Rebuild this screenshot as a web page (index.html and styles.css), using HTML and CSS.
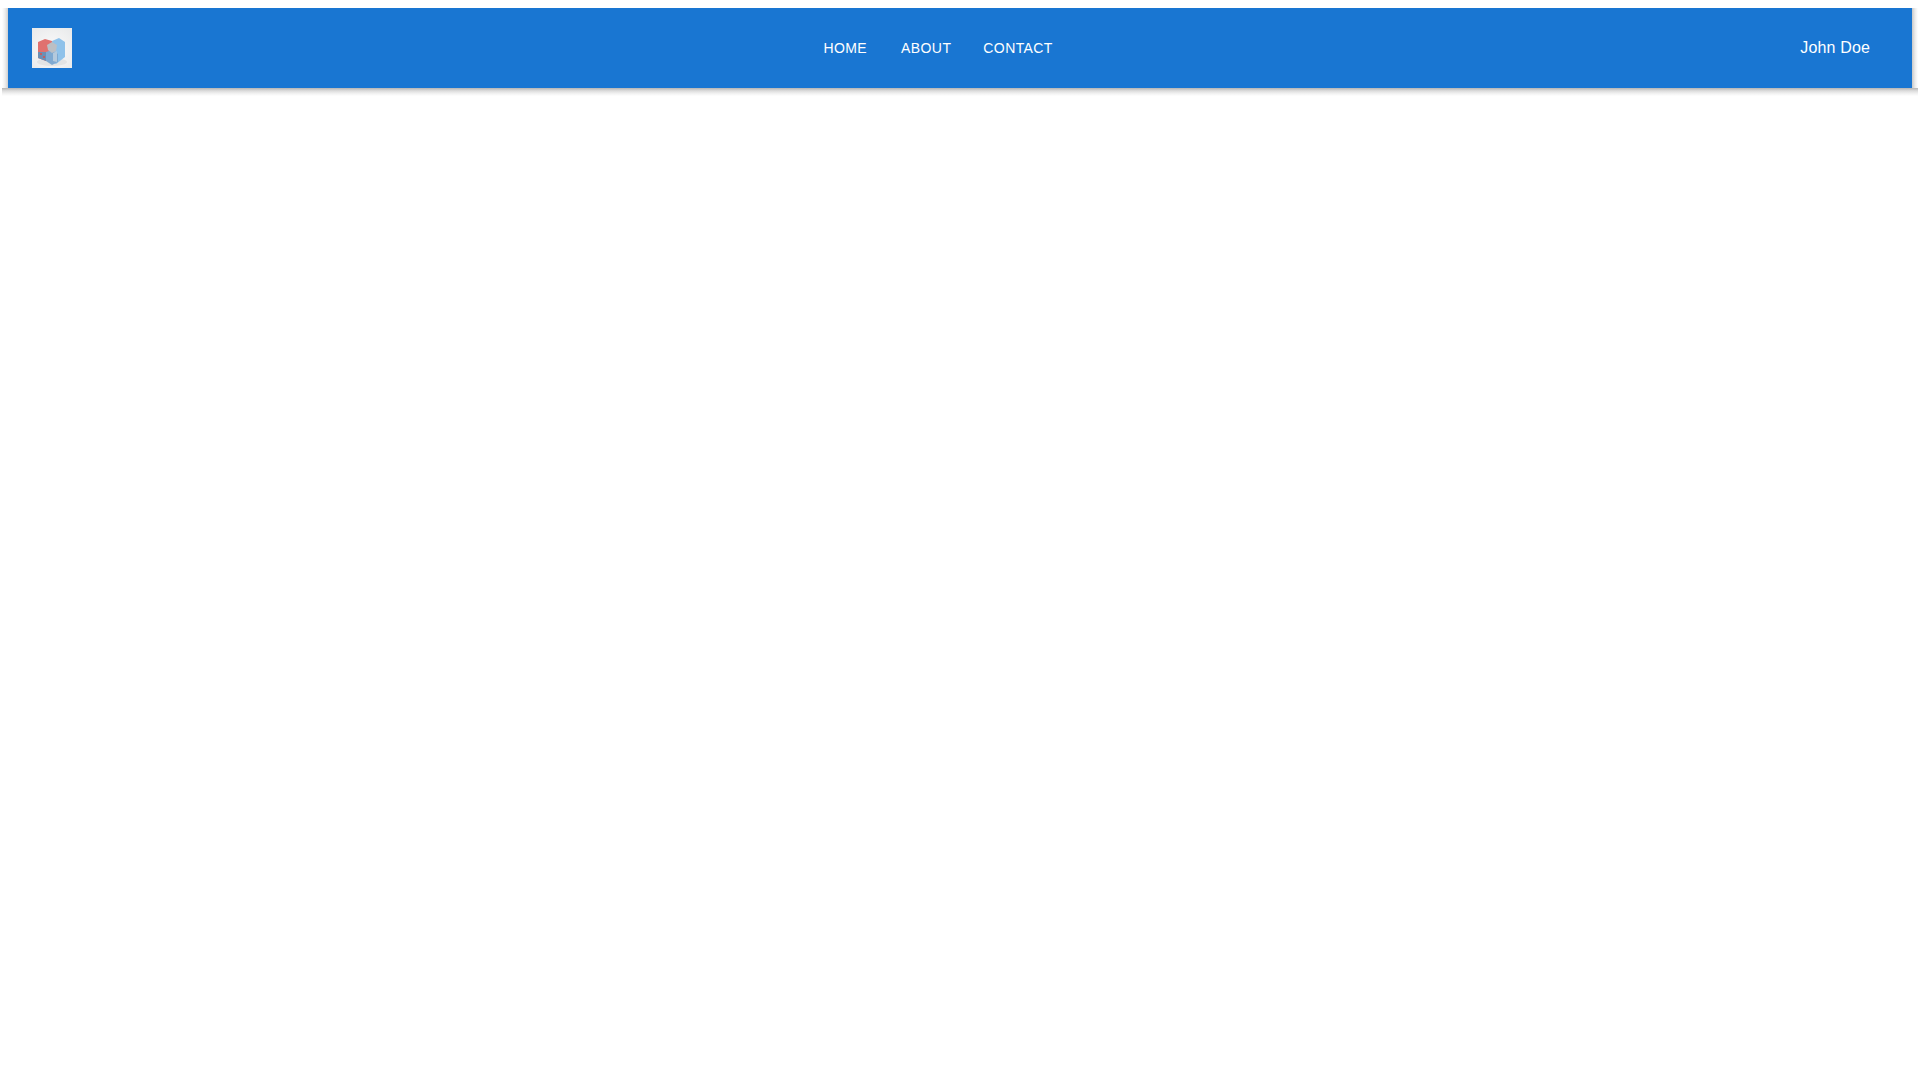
FILE: index.html
```html
<!DOCTYPE html>
<html lang="en">
<head>
<meta charset="utf-8">
<title>App</title>
<link rel="stylesheet" href="styles.css">
</head>
<body>
<div class="bar-shell">
  <div class="shadow-left"></div>
  <header class="app-bar">
    <div class="toolbar">
      <svg class="logo" viewBox="0 0 40 40" width="40" height="40" role="img" aria-label="Logo">
        <defs>
          <radialGradient id="logo-bg" cx="50%" cy="55%" r="70%">
            <stop offset="0%" stop-color="#fbfbfb"/>
            <stop offset="100%" stop-color="#e9eaeb"/>
          </radialGradient>
        </defs>
        <rect width="40" height="40" fill="url(#logo-bg)"/>
        <ellipse cx="20" cy="34" rx="15" ry="4" fill="#e2e3e4"/>
        <path d="M6 14 L13 11 L20 13 L20 24 L14 24 L14 33 L6 30 Z" fill="#e0716f"/>
        <path d="M6 24 L14 24 L14 33 L6 30 Z" fill="#6c8fb4"/>
        <path d="M20 13 L27 10 L33 14 L33 29 L24 36 L20 34 Z" fill="#8fc2ea"/>
        <path d="M14 24 L20 22 L26 26 L26 34 L20 37 L14 33 Z" fill="#7fa9d1"/>
        <path d="M15 17 L20 14 L25 17 L24 23 L20 25 L16 22 Z" fill="#bcbfc4"/>
        <path d="M21 25 L25 23 L25 34 L21 33 Z" fill="#b4c9dc"/>
        <path d="M8 25 h2 v2 h-2 Z M11 28 h2 v2 h-2 Z" fill="#c35f63"/>
      </svg>
      <nav class="nav">
        <a class="nav-link nav-link-first" href="#">Home</a>
        <a class="nav-link" href="#">About</a>
        <a class="nav-link" href="#">Contact</a>
      </nav>
      <div class="user">John Doe</div>
    </div>
  </header>
  <div class="shadow-right"></div>
  <div class="shadow-bottom"></div>
</div>
</body>
</html>
```
FILE: styles.css
```css
html {
  background: #fff;
}

body {
  margin: 8px 2px;
  font-family: "Liberation Sans", Arial, sans-serif;
}

.bar-shell {
  display: grid;
  grid-template-columns: 6px 1fr 6px;
  grid-template-rows: 80px 8px;
}

.shadow-left {
  background: linear-gradient(to left, #d0d0d0, #eeeeee 50%, #ffffff);
}

.shadow-right {
  background: linear-gradient(to right, #c8c8c8, #ebebeb 50%, #ffffff);
}

.shadow-bottom {
  grid-column: 1 / -1;
  background: linear-gradient(to bottom, #b4b4b4, #dcdcdc 35%, #f2f2f2 70%, #ffffff);
}

.app-bar {
  background: #1976d2;
  color: #fff;
}

.toolbar {
  display: flex;
  align-items: center;
  justify-content: space-between;
  height: 80px;
  padding: 0 24px;
}

.logo {
  display: block;
  flex: none;
}

.nav {
  display: flex;
  margin-left: 4px;
}

.nav-link {
  padding: 6px 16px;
  color: #fff;
  font-size: 14px;
  line-height: 24px;
  font-weight: 400;
  letter-spacing: 0.4px;
  text-transform: uppercase;
  text-decoration: none;
}

.nav-link-first {
  margin-right: 2px;
}

.user {
  padding-right: 18px;
  font-size: 16px;
  line-height: 24px;
  letter-spacing: 0.15px;
}
```
